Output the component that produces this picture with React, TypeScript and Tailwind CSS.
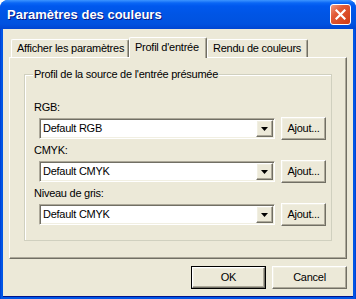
import React from "react";

const raised =
  "bg-[#ECE9D8] border border-t-white border-l-white border-r-[#716F64] border-b-[#716F64] shadow-[inset_-1px_-1px_0_#ACA899,inset_1px_1px_0_#F1EFE2]";

function Combo({ value }: { value: string }) {
  return (
    <div className="ml-[5px] w-[236px] h-[21px] bg-white border border-t-[#ACA899] border-l-[#ACA899] border-r-white border-b-white shadow-[inset_1px_1px_0_#716F64,inset_-1px_-1px_0_#F1EFE2] flex items-center pl-[3px] pr-[1px]">
      <span className="flex-1 leading-[13px]">{value}</span>
      <div className={`w-[17px] h-[17px] flex items-center justify-center ${raised}`}>
        <svg width="7" height="4" viewBox="0 0 7 4">
          <path d="M0 0H7L3.5 4Z" fill="#000" />
        </svg>
      </div>
    </div>
  );
}

function Row({ label, value, first }: { label: string; value: string; first?: boolean }) {
  return (
    <div className={first ? "mt-[26px]" : "mt-[4px]"}>
      <div className="leading-[13px] h-[13px]">{label}</div>
      <div className="mt-[3px] flex items-center h-[23px]">
        <Combo value={value} />
        <button className={`ml-[6px] w-[45px] h-[23px] flex items-center justify-center leading-[13px] ${raised}`}>
          Ajout...
        </button>
      </div>
    </div>
  );
}

export default function App() {
  return (
    <div className="w-[356px] h-[299px] flex flex-col bg-[linear-gradient(to_right,#0031C8_0px,#0055E5_1px,#0055E5_355px,#0031C8_356px)] rounded-t-[8px] overflow-hidden font-['Liberation_Sans',Arial,sans-serif] text-[11px] tracking-[-0.25px] text-black">
      <div className="h-[29px] shrink-0 flex items-center pl-[7px] pr-[5px] bg-[linear-gradient(to_bottom,#3D95FF_0px,#0A66F5_3px,#0058EE_6px,#0055E5_14px,#0052E0_24px,#0045D2_29px)]">
        <span className="flex-1 font-bold text-[13px] tracking-[0px] text-white [text-shadow:1px_1px_0_#0A1883]">
          Paramètres des couleurs
        </span>
        <div className="w-[21px] h-[21px] rounded-[3px] border border-white bg-[linear-gradient(135deg,#F09A80_0%,#E25A36_35%,#D03A14_100%)] flex items-center justify-center">
          <svg width="11" height="11" viewBox="0 0 11 11">
            <path d="M1.5 1.5L9.5 9.5M9.5 1.5L1.5 9.5" stroke="#fff" strokeWidth="2.2" strokeLinecap="square" />
          </svg>
        </div>
      </div>
      <div className="flex-1 mx-[3px] mb-[3px] bg-[#ECE9D8] flex flex-col px-[6px] pt-[8px] shadow-[0_1px_0_#00138C]">
        <div className="h-[20px] flex items-end pl-[2px]">
          <div className="w-[118px] h-[18px] flex items-center pl-[5px] pb-[1px] bg-[#ECE9D8] border-t border-l border-t-white border-l-white border-r border-r-[#716F64] shadow-[inset_-1px_0_0_#ACA899] rounded-t-[2px]">
            Afficher les paramètres
          </div>
          <div className="relative z-10 -mb-px w-[78px] h-[21px] flex items-center pl-[5px] pb-[2px] bg-[#ECE9D8] border-t border-l border-t-white border-l-white border-r border-r-[#716F64] shadow-[inset_-1px_0_0_#ACA899] rounded-t-[2px]">
            Profil d'entrée
          </div>
          <div className="w-[101px] h-[18px] flex items-center pl-[5px] pb-[1px] bg-[#ECE9D8] border-t border-l border-t-white border-l-white border-r border-r-[#716F64] shadow-[inset_-1px_0_0_#ACA899] rounded-t-[2px]">
            Rendu de couleurs
          </div>
        </div>
        <div className="h-[202px] border border-t-white border-l-white border-r-[#716F64] border-b-[#716F64] shadow-[inset_-1px_-1px_0_#ACA899] pt-[16px] px-[14px]">
          <div className="relative h-[167px] border border-[#D0D0BF] shadow-[inset_1px_1px_0_#fff] pl-[9px] pr-[4px]">
            <span className="absolute -top-[7px] left-[8px] px-[1px] leading-[13px] bg-[#ECE9D8]">
              Profil de la source de l'entrée présumée
            </span>
            <Row first label="RGB:" value="Default RGB" />
            <Row label="CMYK:" value="Default CMYK" />
            <Row label="Niveau de gris:" value="Default CMYK" />
          </div>
        </div>
        <div className="mt-[7px] flex justify-end gap-[6px]">
          <button className="w-[75px] h-[23px] border border-black flex">
            <span className={`flex-1 flex items-center justify-center ${raised}`}>OK</span>
          </button>
          <button className={`w-[75px] h-[23px] flex items-center justify-center ${raised}`}>Cancel</button>
        </div>
      </div>
    </div>
  );
}
